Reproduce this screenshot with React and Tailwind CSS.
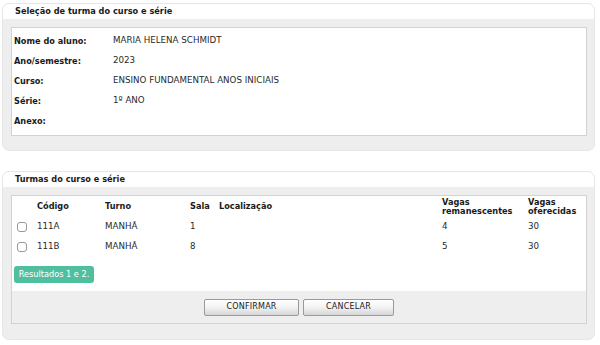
const font = { fontFamily: '"DejaVu Sans", Verdana, sans-serif' };

const info = [
  ["Nome do aluno:", "MARIA HELENA SCHMIDT"],
  ["Ano/semestre:", "2023"],
  ["Curso:", "ENSINO FUNDAMENTAL ANOS INICIAIS"],
  ["Série:", "1º ANO"],
  ["Anexo:", ""],
];

const turmas = [
  { codigo: "111A", turno: "MANHÃ", sala: "1", loc: "", rem: "4", of: "30" },
  { codigo: "111B", turno: "MANHÃ", sala: "8", loc: "", rem: "5", of: "30" },
];

const cols = "grid grid-cols-[20px_68px_85px_29px_223px_86px_1fr] pl-[5px] items-center";

const Panel = ({ title, children, className }) => (
  <div className={`w-[593px] ml-[2px] rounded-[7px] border border-[#e6e6e6] bg-[#eeeeee] overflow-hidden ${className}`}>
    <div className="h-[15px] bg-white flex items-center pl-[12px] text-[8.2px] font-bold text-[#1a1a1a]">
      {title}
    </div>
    <div className="pt-[8px] pl-[8px] pr-[7px]">{children}</div>
  </div>
);

const Button = ({ children, w }) => (
  <button
    className={`${w} h-[17px] rounded-[2px] border border-[#9a9a9a] bg-gradient-to-b from-white via-[#f2f2f2] to-[#d6d6d6] text-[8px] text-[#222] tracking-[0.2px] flex items-center justify-center`}
  >
    {children}
  </button>
);

export default function App() {
  return (
    <div className="w-[600px] h-[345px] bg-white pt-[3px] text-[#2a2a2a]" style={font}>
      <Panel title="Seleção de turma do curso e série" className="pb-[14px]">
        <div className="border border-[#d2d2d2] bg-white pt-[3px] pb-[4px] pl-[2px]">
          {info.map(([label, value]) => (
            <div key={label} className="grid grid-cols-[99px_1fr] h-[20px] items-center">
              <span className="text-[8.2px] font-bold text-[#1a1a1a]">{label}</span>
              <span className="text-[8.7px]">{value}</span>
            </div>
          ))}
        </div>
      </Panel>

      <Panel title="Turmas do curso e série" className="mt-[20px] pb-[15px]">
        <div className="border border-[#d2d2d2] bg-white">
          <div className={`${cols} h-[21px] text-[8.2px] font-bold text-[#1a1a1a]`}>
            <span />
            <span>Código</span>
            <span>Turno</span>
            <span>Sala</span>
            <span>Localização</span>
            <span className="leading-[9px] pt-[1px]">Vagas<br />remanescentes</span>
            <span className="leading-[9px] pt-[1px]">Vagas<br />oferecidas</span>
          </div>
          {turmas.map((t) => (
            <div key={t.codigo} className={`${cols} h-[20px] text-[8.7px]`}>
              <span className="w-[10px] h-[10px] rounded-[3px] border border-[#999999] bg-white" />
              <span>{t.codigo}</span>
              <span>{t.turno}</span>
              <span>{t.sala}</span>
              <span>{t.loc}</span>
              <span>{t.rem}</span>
              <span>{t.of}</span>
            </div>
          ))}
          <div className="mt-[9px] ml-[2px] w-[80px] h-[17px] rounded-[3px] bg-[#4fbf9f] text-white text-[8.2px] flex items-center justify-center">
            Resultados 1 e 2.
          </div>
          <div className="mt-[8px] h-[32px] bg-[#eeeeee] flex items-center justify-center gap-[4px]">
            <Button w="w-[95px]">CONFIRMAR</Button>
            <Button w="w-[91px]">CANCELAR</Button>
          </div>
        </div>
      </Panel>
    </div>
  );
}
